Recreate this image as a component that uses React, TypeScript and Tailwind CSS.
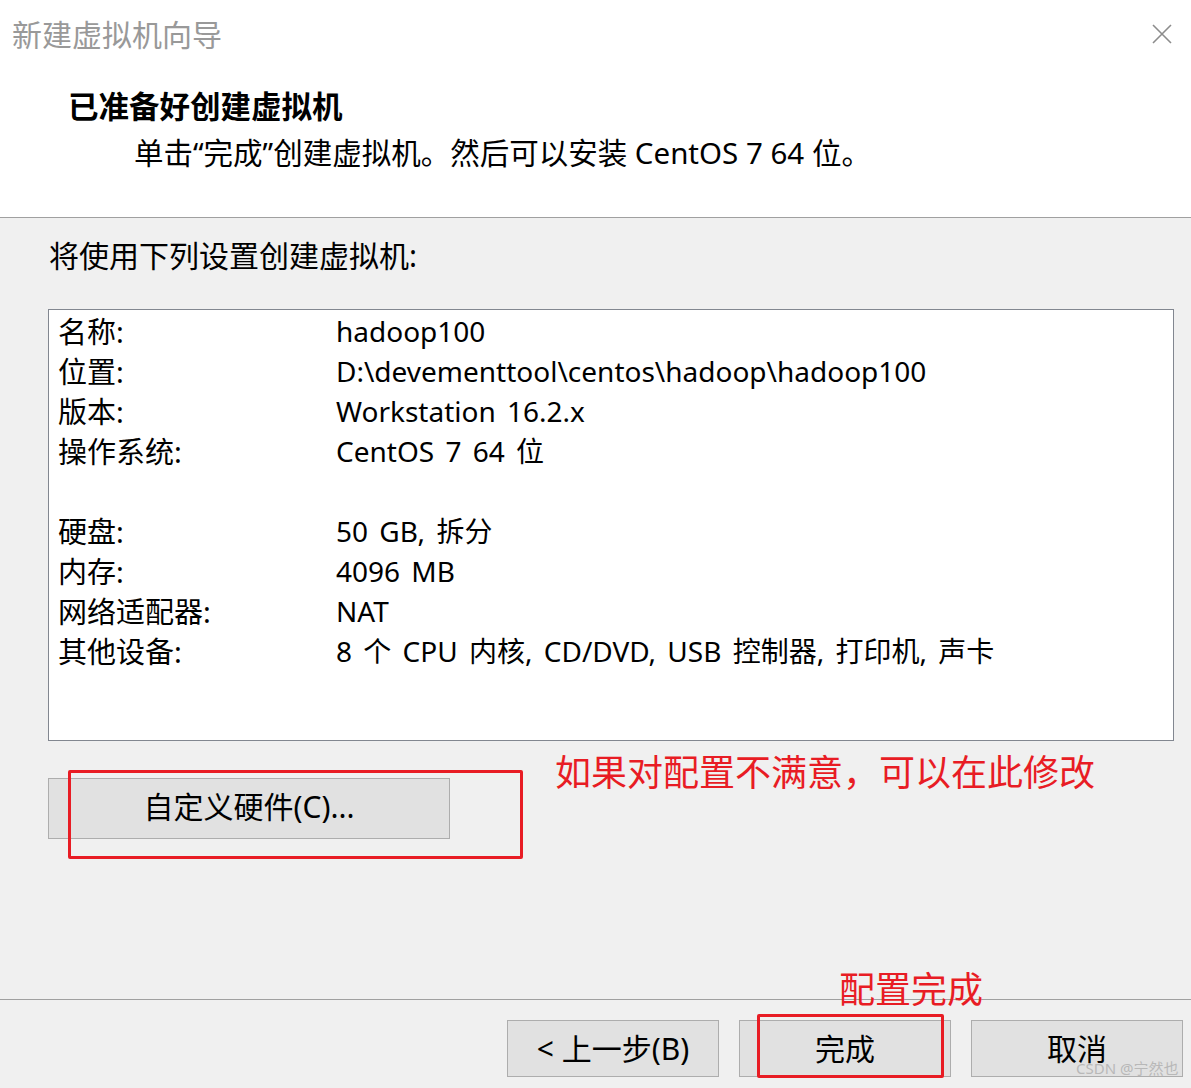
import React from "react";

const rows: { label: string; value: string }[] = [
  { label: "名称:", value: "hadoop100" },
  { label: "位置:", value: "D:\\devementtool\\centos\\hadoop\\hadoop100" },
  { label: "版本:", value: "Workstation 16.2.x" },
  { label: "操作系统:", value: "CentOS 7 64 位" },
  { label: "", value: "" },
  { label: "硬盘:", value: "50 GB, 拆分" },
  { label: "内存:", value: "4096 MB" },
  { label: "网络适配器:", value: "NAT" },
  { label: "其他设备:", value: "8 个 CPU 内核, CD/DVD, USB 控制器, 打印机, 声卡" },
];

const font = "font-['Noto_Sans','Noto_Sans_CJK_SC',sans-serif]";

const App: React.FC = () => {
  return (
    <div className={`relative w-[1191px] h-[1088px] bg-[#f0f0f0] overflow-hidden text-black ${font}`}>
      {/* 顶部白色区域 */}
      <div className="h-[218px] bg-white border-b border-[#a0a0a0]">
        <div className="flex items-center justify-between h-[70px] pl-[12px] pr-[18px]">
          <span className="text-[30px] text-[#999999] leading-none">新建虚拟机向导</span>
          <svg width="22" height="22" viewBox="0 0 22 22" className="mb-[2px]">
            <path d="M2 2 L20 20 M20 2 L2 20" stroke="#8c8c8c" strokeWidth="1.6" />
          </svg>
        </div>
        <div className="pl-[68px] pt-[21px] text-[30.5px] font-bold leading-none">已准备好创建虚拟机</div>
        <div className="pl-[134px] pt-[16px] text-[29.5px] leading-none">
          单击“完成”创建虚拟机。然后可以安装 CentOS 7 64 位。
        </div>
      </div>

      {/* 设置内容 */}
      <div className="h-[782px] border-b border-[#a0a0a0] px-[48px] pt-[23px]">
        <div className="pl-[1px] text-[30px] leading-none h-[68px]">将使用下列设置创建虚拟机:</div>
        <div className="w-[1126px] h-[432px] bg-white border border-[#828790] pl-[9px] pt-[1px]">
          {rows.map((r, i) => (
            <div key={i} className="flex h-[40px] items-center leading-none">
              <span className="w-[278px] text-[29px]">{r.label}</span>
              <span className="text-[28px] [word-spacing:4px]">{r.value}</span>
            </div>
          ))}
        </div>
        <div className="pt-[37px]">
          <button className="w-[402px] h-[61px] bg-[#e1e1e1] border border-[#adadad] text-[30px] leading-none pb-[3px]">
            自定义硬件(C)...
          </button>
        </div>
      </div>

      {/* 底部按钮 */}
      <div className="flex justify-end gap-[20px] pr-[8px] pt-[20px]">
        {["< 上一步(B)", "完成", "取消"].map((t) => (
          <button
            key={t}
            className="w-[212px] h-[57px] bg-[#e1e1e1] border border-[#adadad] text-[30px] leading-none"
          >
            {t}
          </button>
        ))}
      </div>

      {/* 标注 */}
      <div className="absolute left-[68px] top-[770px] w-[455px] h-[89px] border-[3px] border-[#e81c24] rounded-[2px]" />
      <div className="absolute left-[555px] top-[752px] text-[36px] leading-none text-[#e81c24] font-['Noto_Sans_CJK_SC',sans-serif]">
        如果对配置不满意，可以在此修改
      </div>
      <div className="absolute left-[757px] top-[1014px] w-[187px] h-[64px] border-[3px] border-[#e81c24] rounded-[2px]" />
      <div className="absolute left-[839px] top-[969px] text-[36px] leading-none text-[#e81c24] font-['Noto_Sans_CJK_SC',sans-serif]">
        配置完成
      </div>
      <div className="absolute left-[1076px] top-[1061px] text-[15px] leading-none text-[#b8b8b8]">
        CSDN @宁然也
      </div>
    </div>
  );
};

export default App;
